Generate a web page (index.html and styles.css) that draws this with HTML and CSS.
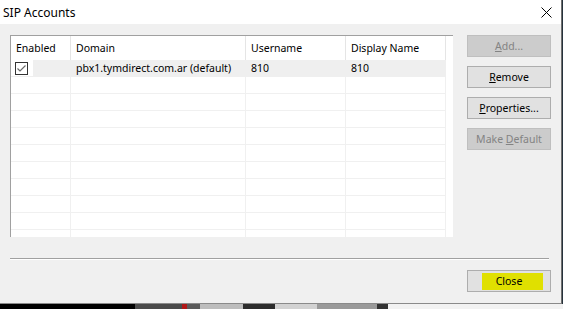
FILE: index.html
```html
<!DOCTYPE html>
<html lang="en">
<head>
    <meta charset="UTF-8">
    <title>SIP Accounts</title>
    <link rel="stylesheet" href="styles.css">
</head>
<body>
<div class="window">
    <div class="titlebar">
        <span class="title">SIP Accounts</span>
        <svg class="close-x" width="11" height="11" viewBox="0 0 11 11">
            <path d="M0.5 0.5 L10.5 10.5 M10.5 0.5 L0.5 10.5" stroke="#000" stroke-width="1" fill="none"/>
        </svg>
    </div>

    <div class="dialog">
        <div class="main">
            <div class="list">
                <div class="row head">
                    <div class="cell first">Enabled</div>
                    <div class="cell">Domain</div>
                    <div class="cell">Username</div>
                    <div class="cell">Display Name</div>
                </div>
                <div class="row selected">
                    <div class="cell first">
                        <svg class="check" width="13" height="13" viewBox="0 0 13 13">
                            <rect x="0.5" y="0.5" width="12" height="12" fill="#fff" stroke="#333"/>
                            <path d="M2.5 6.5 L5 9 L10.5 3.5" stroke="#6a6a6a" stroke-width="1.2" fill="none"/>
                        </svg>
                    </div>
                    <div class="cell">pbx1.tymdirect.com.ar (default)</div>
                    <div class="cell">810</div>
                    <div class="cell">810</div>
                </div>
                <div class="row"><div class="cell"></div><div class="cell"></div><div class="cell"></div><div class="cell"></div></div>
                <div class="row"><div class="cell"></div><div class="cell"></div><div class="cell"></div><div class="cell"></div></div>
                <div class="row"><div class="cell"></div><div class="cell"></div><div class="cell"></div><div class="cell"></div></div>
                <div class="row"><div class="cell"></div><div class="cell"></div><div class="cell"></div><div class="cell"></div></div>
                <div class="row"><div class="cell"></div><div class="cell"></div><div class="cell"></div><div class="cell"></div></div>
                <div class="row"><div class="cell"></div><div class="cell"></div><div class="cell"></div><div class="cell"></div></div>
                <div class="row"><div class="cell"></div><div class="cell"></div><div class="cell"></div><div class="cell"></div></div>
                <div class="row"><div class="cell"></div><div class="cell"></div><div class="cell"></div><div class="cell"></div></div>
                <div class="row"><div class="cell"></div><div class="cell"></div><div class="cell"></div><div class="cell"></div></div>
                <div class="row"><div class="cell"></div><div class="cell"></div><div class="cell"></div><div class="cell"></div></div>
            </div>

            <div class="actions">
                <button class="btn disabled"><u>A</u>dd...</button>
                <button class="btn"><u>R</u>emove</button>
                <button class="btn"><u>P</u>roperties...</button>
                <button class="btn disabled">Make <u>D</u>efault</button>
            </div>
        </div>

        <div class="separator"></div>

        <div class="footer">
            <button class="btn close-btn">
                <span class="marker"></span>
                <span class="label">Close</span>
            </button>
        </div>
    </div>
</div>

<div class="desktop">
    <span class="strip s1"></span>
    <span class="strip s2"></span>
    <span class="strip s3"></span>
    <span class="strip s4"></span>
    <span class="strip s5"></span>
    <span class="strip s6"></span>
    <span class="strip s7"></span>
    <span class="strip s8"></span>
    <span class="strip s9"></span>
    <span class="strip s10"></span>
</div>
</body>
</html>
```

FILE: styles.css
```css
body, html {
    margin: 0;
    padding: 0;
    background-color: #26323c;
    font-family: "Noto Sans", sans-serif;
    color: #000;
}

.window {
    width: 562px;
    height: 304px;
    box-sizing: border-box;
    border-right: 1px solid #707070;
    border-bottom: 1px solid #8a8a8a;
    background: #f0f0f0;
    display: flex;
    flex-direction: column;
}

.titlebar {
    height: 24px;
    background: #fff;
    display: flex;
    align-items: center;
    padding-left: 3px;
    padding-right: 9px;
}

.title {
    font-size: 12px;
    flex: 1;
}

.close-x {
    display: block;
}

.dialog {
    padding: 11px 10px 0 10px;
}

.main {
    display: flex;
    gap: 14px;
}

/* list view */
.list {
    width: 443px;
    height: 202px;
    box-sizing: border-box;
    background: #fff;
    border-top: 1px solid #a0a0a0;
    border-left: 1px solid #a0a0a0;
    overflow: hidden;
    font-size: 10.5px;
}

.row {
    display: grid;
    grid-template-columns: 60px 175px 100px 100px;
    width: 435px;
    height: 17px;
}

.row .cell {
    box-sizing: border-box;
    border-right: 1px solid #f0f0f0;
    border-bottom: 1px solid #f0f0f0;
    padding-left: 5px;
    display: flex;
    align-items: center;
    white-space: nowrap;
}

.row.head {
    height: 24px;
}

.row.head .cell {
    border-bottom: none;
    border-right-color: #e5e5e5;
    padding-left: 5px;
}

.row.selected .cell {
    background: #efefef;
    border-color: #efefef;
}

.row.selected .cell.first {
    background: linear-gradient(to right, #fff 22px, #efefef 22px);
    padding-left: 4px;
}

.check {
    display: block;
}

/* buttons */
.actions {
    display: flex;
    flex-direction: column;
    gap: 9px;
}

.btn {
    width: 84px;
    height: 22px;
    box-sizing: border-box;
    padding: 0;
    margin: 0;
    background: #e1e1e1;
    border: 1px solid #adadad;
    font-family: "Noto Sans", sans-serif;
    font-size: 10.5px;
    color: #000;
}

.btn.disabled {
    background: #cccccc;
    border-color: #bfbfbf;
    color: #838383;
}

.separator {
    margin: 21px 2px 0 0;
    height: 1px;
    background: #a0a0a0;
    border-bottom: 1px solid #fff;
}

.footer {
    display: flex;
    justify-content: flex-end;
    margin-top: 10px;
}

.close-btn {
    position: relative;
}

.close-btn .marker {
    position: absolute;
    left: 14px;
    top: 2px;
    width: 61px;
    height: 17px;
    background: #e0e000;
}

.close-btn .label {
    position: relative;
}

/* the desktop strip under the dialog */
.desktop {
    display: flex;
    height: 5px;
}

.strip { display: block; height: 5px; }
.s1 { width: 135px; background: #000; }
.s2 { width: 47px; background: #4a4a4a; }
.s3 { width: 5px; background: #b01818; }
.s4 { width: 13px; background: #5a5a5a; }
.s5 { width: 43px; background: #bdbdbd; }
.s6 { width: 32px; background: #2c2c2c; }
.s7 { width: 42px; background: #d2d2d2; }
.s8 { width: 60px; background: #9a9a9a; }
.s9 { width: 11px; background: #333; }
.s10 { flex: 1; background: #f2f2f2; }
```
